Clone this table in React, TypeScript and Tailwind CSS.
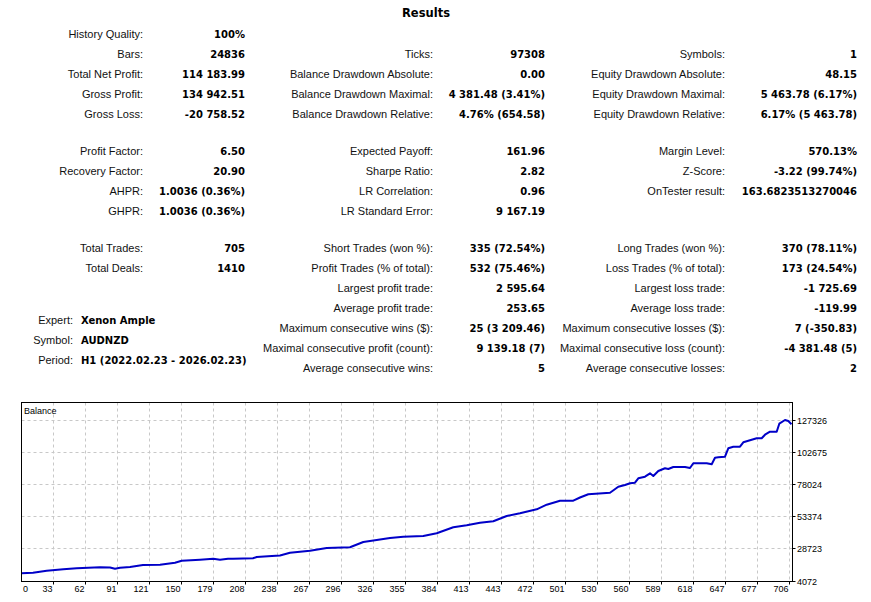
import React from "react";

type Row = [string, string] | null | "gap";

const LBL = "text-right whitespace-nowrap text-[11px] text-[#111] font-['Liberation_Sans',Arial,sans-serif]";
const VAL = "text-right whitespace-nowrap text-[10px] font-bold text-black font-['DejaVu_Sans',Verdana,sans-serif]";
const VAL_L = "text-left whitespace-nowrap text-[10px] font-bold text-black font-['DejaVu_Sans',Verdana,sans-serif]";

function Column({ rows, cols }: { rows: Row[]; cols: string }) {
  return (
    <div className="flex flex-col">
      {rows.map((r, i) =>
        r === "gap" ? (
          <div key={i} className="h-[17px]" />
        ) : (
          <div key={i} className={`grid h-5 items-center ${cols}`}>
            <div className={LBL}>{r ? r[0] : ""}</div>
            <div className={VAL}>{r ? r[1] : ""}</div>
          </div>
        )
      )}
    </div>
  );
}

const left: Row[] = [
  ["History Quality:", "100%"],
  ["Bars:", "24836"],
  ["Total Net Profit:", "114 183.99"],
  ["Gross Profit:", "134 942.51"],
  ["Gross Loss:", "-20 758.52"],
  "gap",
  ["Profit Factor:", "6.50"],
  ["Recovery Factor:", "20.90"],
  ["AHPR:", "1.0036 (0.36%)"],
  ["GHPR:", "1.0036 (0.36%)"],
  "gap",
  ["Total Trades:", "705"],
  ["Total Deals:", "1410"],
];

const middle: Row[] = [
  null,
  ["Ticks:", "97308"],
  ["Balance Drawdown Absolute:", "0.00"],
  ["Balance Drawdown Maximal:", "4 381.48 (3.41%)"],
  ["Balance Drawdown Relative:", "4.76% (654.58)"],
  "gap",
  ["Expected Payoff:", "161.96"],
  ["Sharpe Ratio:", "2.82"],
  ["LR Correlation:", "0.96"],
  ["LR Standard Error:", "9 167.19"],
  "gap",
  ["Short Trades (won %):", "335 (72.54%)"],
  ["Profit Trades (% of total):", "532 (75.46%)"],
  ["Largest profit trade:", "2 595.64"],
  ["Average profit trade:", "253.65"],
  ["Maximum consecutive wins ($):", "25 (3 209.46)"],
  ["Maximal consecutive profit (count):", "9 139.18 (7)"],
  ["Average consecutive wins:", "5"],
];

const right: Row[] = [
  null,
  ["Symbols:", "1"],
  ["Equity Drawdown Absolute:", "48.15"],
  ["Equity Drawdown Maximal:", "5 463.78 (6.17%)"],
  ["Equity Drawdown Relative:", "6.17% (5 463.78)"],
  "gap",
  ["Margin Level:", "570.13%"],
  ["Z-Score:", "-3.22 (99.74%)"],
  ["OnTester result:", "163.6823513270046"],
  null,
  "gap",
  ["Long Trades (won %):", "370 (78.11%)"],
  ["Loss Trades (% of total):", "173 (24.54%)"],
  ["Largest loss trade:", "-1 725.69"],
  ["Average loss trade:", "-119.99"],
  ["Maximum consecutive losses ($):", "7 (-350.83)"],
  ["Maximal consecutive loss (count):", "-4 381.48 (5)"],
  ["Average consecutive losses:", "2"],
];

const pts: [number, number][] = [
  [21.5, 573.3], [33, 572.7], [46.7, 570.7], [63.3, 569.3], [76.7, 568.3], [100, 567.3], [110, 567.5], [115, 568.7],
  [120, 567.7], [130, 567], [143, 565], [160, 564.7], [175, 562.7], [181.7, 560.7], [200, 559.7], [213.3, 558.7],
  [220, 559.7], [228, 558.7], [233, 558.7], [253, 558.3], [256.7, 557], [268, 556.3], [280, 555.5], [290, 552.7],
  [310, 550.7], [326.7, 548], [350, 547.3], [363.3, 542], [376.7, 540], [390, 538], [403.3, 536.7], [423.3, 536],
  [436.7, 533.3], [453.3, 527.3], [466.7, 525.3], [480, 522.7], [493.3, 521.3], [506.7, 516], [520, 513.3],
  [536.7, 509.3], [546.7, 504.7], [560, 500.7], [573.3, 500.7], [580, 497.5], [588.3, 494.3], [610, 492.7],
  [618.3, 486.7], [625, 485], [630, 483.3], [635, 482.7], [638.3, 478.3], [645, 476.7], [650, 473.3], [653.3, 476],
  [658.3, 471], [665, 468.3], [668.3, 469], [673.3, 467], [685, 467], [690, 468], [693.3, 463.3], [706.7, 463.3],
  [711.7, 464.3], [715, 457.7], [718.3, 457.3], [725, 456.7], [728.3, 448.3], [733.3, 446.7], [740, 446.7],
  [743.3, 442.3], [750, 440.3], [756.7, 438.3], [761.7, 438.3], [765, 434.7], [770, 431.7], [776.7, 431.7],
  [779.3, 423.7], [785, 420], [788.3, 421], [791.5, 424.3],
];

const xLabels = ["33", "62", "91", "121", "150", "179", "208", "238", "267", "296", "326", "355", "384", "413", "443", "472", "501", "530", "560", "589", "618", "647", "677", "706"];
const yLabels = ["127326", "102675", "78024", "53374", "28723"];

function Chart() {
  const L = 21.5, R = 792.5, T = 402.5, B = 581.5;
  return (
    <svg width={871} height={224} viewBox="0 378 871 224" className="block" style={{ fontFamily: "'Liberation Sans', Arial, sans-serif" }}>
      <rect x={0} y={378} width={871} height={224} fill="#ffffff" />
      {xLabels.map((_, k) => {
        const x = 53.5 + 32 * k;
        return (
          <g key={k}>
            <line x1={x} y1={T} x2={x} y2={B} stroke="#c8c8c8" strokeDasharray="3 3" />
            <line x1={x} y1={B} x2={x} y2={B + 3} stroke="#000" />
            <text x={x - 1} y={592} fontSize={9} textAnchor="end" fill="#000">{xLabels[k]}</text>
          </g>
        );
      })}
      {yLabels.map((lab, k) => {
        const y = 420.5 + 32 * k;
        return (
          <g key={lab}>
            <line x1={L} y1={y} x2={R} y2={y} stroke="#c8c8c8" strokeDasharray="3 3" />
            <line x1={R} y1={y} x2={R + 3} y2={y} stroke="#000" />
            <text x={797} y={y + 3.5} fontSize={9} fill="#000">{lab}</text>
          </g>
        );
      })}
      <line x1={R} y1={B} x2={R + 3} y2={B} stroke="#000" />
      <text x={797} y={585} fontSize={9} fill="#000">4072</text>
      <text x={23} y={592} fontSize={9} fill="#000">0</text>
      <polyline points={pts.map((p) => p.join(",")).join(" ")} fill="none" stroke="#0000c8" strokeWidth={2} strokeLinejoin="round" />
      <rect x={L} y={T} width={R - L} height={B - T} fill="none" stroke="#000" />
      <text x={24} y={413.5} fontSize={9} fill="#000">Balance</text>
    </svg>
  );
}

export default function App() {
  return (
    <div className="w-[871px] h-[602px] bg-white overflow-hidden">
      <div className="w-[852px] h-6 pt-[2px] text-center leading-[22px] text-[11.5px] font-bold text-black font-['DejaVu_Sans',Verdana,sans-serif]">
        Results
      </div>
      <div className="flex h-[354px]">
        <div className="flex flex-col w-[245px]">
          <Column rows={left} cols="grid-cols-[143px_102px]" />
          <div className="mt-[32px] flex flex-col">
            {[
              ["Expert:", "Xenon Ample"],
              ["Symbol:", "AUDNZD"],
              ["Period:", "H1 (2022.02.23 - 2026.02.23)"],
            ].map(([a, b]) => (
              <div key={a} className="grid h-5 items-center grid-cols-[73px_auto] gap-x-[8px]">
                <div className={LBL}>{a}</div>
                <div className={VAL_L}>{b}</div>
              </div>
            ))}
          </div>
        </div>
        <div className="w-[300px]">
          <Column rows={middle} cols="grid-cols-[188px_112px]" />
        </div>
        <div className="w-[312px]">
          <Column rows={right} cols="grid-cols-[180px_132px]" />
        </div>
      </div>
      <Chart />
    </div>
  );
}
